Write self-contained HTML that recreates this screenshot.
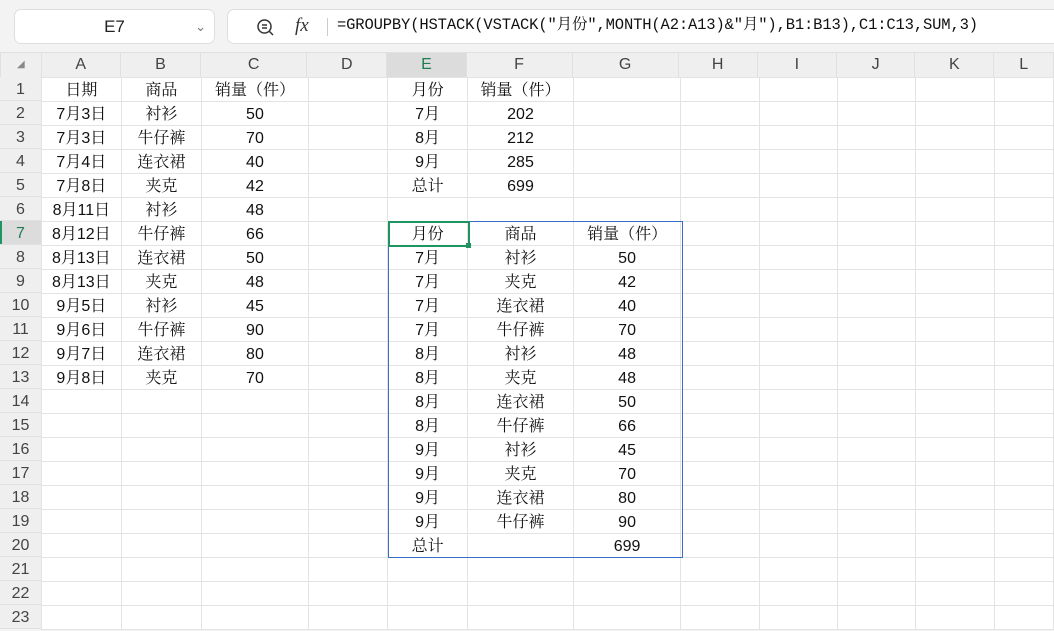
<!DOCTYPE html>
<html><head><meta charset="utf-8"><style>
*{margin:0;padding:0;box-sizing:border-box}
body{width:1054px;height:627px;overflow:hidden;background:#f3f3f3;font-family:"Liberation Sans","Noto Serif CJK SC",serif;position:relative}
.box{position:absolute;background:#fff;border:1px solid #dedede;border-radius:7px}
#name{left:14px;top:9px;width:201px;height:35px;font:17px "Liberation Sans",sans-serif;color:#222;text-align:center;line-height:33px}
#fx{left:227px;top:9px;width:840px;height:35px}
#formula{position:absolute;left:337px;top:9px;line-height:33px;font-size:15.5px;color:#111;font-family:"Liberation Mono","Noto Serif CJK SC",monospace;white-space:nowrap;letter-spacing:-0.15px}
table{position:absolute;border-collapse:collapse;table-layout:fixed}
td{border:1px solid #e3e3e3;height:24px;text-align:center;font-size:16px;color:#111;padding:0;line-height:21px;vertical-align:bottom;white-space:nowrap;overflow:hidden}
#hdr td{background:#efefef;font:16px "Liberation Sans",sans-serif;color:#444;height:25px;border-color:#e0e0e0;padding:0;vertical-align:middle;line-height:22px}
#grid{left:41px;top:77px;background:#fff}
#rows{position:absolute;left:0;top:77px;width:42px;background:#efefef}
#rows div{height:24px;border-bottom:1px solid #e0e0e0;font:16px "Liberation Sans",sans-serif;color:#444;text-align:center;line-height:26px;border-right:1px solid #e0e0e0}
</style></head><body>
<div class="box" id="name">E7<span style="position:absolute;right:8px;top:0;color:#777;font-size:13px">&#8964;</span></div>
<div class="box" id="fx">
<svg style="position:absolute;left:27px;top:7px" width="22" height="22" viewBox="0 0 22 22"><circle cx="9.5" cy="9.5" r="6.5" fill="none" stroke="#333" stroke-width="1.5"/><path d="M14.5 14.5L18 18M7 8h5M7 11h5" stroke="#333" stroke-width="1.5"/></svg>
<span style="position:absolute;left:67px;top:5px;font:italic 19px 'Liberation Serif',serif;color:#333">fx</span>
<div style="position:absolute;left:99px;top:8px;width:1px;height:18px;background:#ccc"></div>
</div>
<div id="formula">=GROUPBY(HSTACK(VSTACK("月份",MONTH(A2:A13)&amp;"月"),B1:B13),C1:C13,SUM,3)</div>
<table id="hdr" style="left:0;top:52px">
<colgroup><col style="width:41px"><col style="width:80px"><col style="width:81px"><col style="width:107px"><col style="width:81px"><col style="width:80px"><col style="width:107px"><col style="width:107px"><col style="width:80px"><col style="width:80px"><col style="width:79px"><col style="width:80px"><col style="width:60px"></colgroup>
<tr><td style="color:#888;font-size:10px">&#9698;</td><td>A</td><td>B</td><td>C</td><td>D</td><td style="background:#dcdcdc;color:#1e7d52;border-bottom:2px solid #1e9461">E</td><td>F</td><td>G</td><td>H</td><td>I</td><td>J</td><td>K</td><td>L</td></tr></table>
<div id="rows">
<div>1</div><div>2</div><div>3</div><div>4</div><div>5</div><div>6</div><div style="background:#dcdcdc;color:#1e7d52;box-shadow:inset 2px 0 #1e9461">7</div><div>8</div><div>9</div><div>10</div><div>11</div><div>12</div><div>13</div><div>14</div><div>15</div><div>16</div><div>17</div><div>18</div><div>19</div><div>20</div><div>21</div><div>22</div><div>23</div></div>
<table id="grid">
<colgroup><col style="width:80px"><col style="width:81px"><col style="width:107px"><col style="width:81px"><col style="width:80px"><col style="width:107px"><col style="width:107px"><col style="width:80px"><col style="width:80px"><col style="width:79px"><col style="width:80px"><col style="width:60px"></colgroup>
<tr><td>日期</td><td>商品</td><td>销量（件）</td><td></td><td>月份</td><td>销量（件）</td><td></td><td></td><td></td><td></td><td></td><td></td></tr>
<tr><td>7月3日</td><td>衬衫</td><td>50</td><td></td><td>7月</td><td>202</td><td></td><td></td><td></td><td></td><td></td><td></td></tr>
<tr><td>7月3日</td><td>牛仔裤</td><td>70</td><td></td><td>8月</td><td>212</td><td></td><td></td><td></td><td></td><td></td><td></td></tr>
<tr><td>7月4日</td><td>连衣裙</td><td>40</td><td></td><td>9月</td><td>285</td><td></td><td></td><td></td><td></td><td></td><td></td></tr>
<tr><td>7月8日</td><td>夹克</td><td>42</td><td></td><td>总计</td><td>699</td><td></td><td></td><td></td><td></td><td></td><td></td></tr>
<tr><td>8月11日</td><td>衬衫</td><td>48</td><td></td><td></td><td></td><td></td><td></td><td></td><td></td><td></td><td></td></tr>
<tr><td>8月12日</td><td>牛仔裤</td><td>66</td><td></td><td>月份</td><td>商品</td><td>销量（件）</td><td></td><td></td><td></td><td></td><td></td></tr>
<tr><td>8月13日</td><td>连衣裙</td><td>50</td><td></td><td>7月</td><td>衬衫</td><td>50</td><td></td><td></td><td></td><td></td><td></td></tr>
<tr><td>8月13日</td><td>夹克</td><td>48</td><td></td><td>7月</td><td>夹克</td><td>42</td><td></td><td></td><td></td><td></td><td></td></tr>
<tr><td>9月5日</td><td>衬衫</td><td>45</td><td></td><td>7月</td><td>连衣裙</td><td>40</td><td></td><td></td><td></td><td></td><td></td></tr>
<tr><td>9月6日</td><td>牛仔裤</td><td>90</td><td></td><td>7月</td><td>牛仔裤</td><td>70</td><td></td><td></td><td></td><td></td><td></td></tr>
<tr><td>9月7日</td><td>连衣裙</td><td>80</td><td></td><td>8月</td><td>衬衫</td><td>48</td><td></td><td></td><td></td><td></td><td></td></tr>
<tr><td>9月8日</td><td>夹克</td><td>70</td><td></td><td>8月</td><td>夹克</td><td>48</td><td></td><td></td><td></td><td></td><td></td></tr>
<tr><td></td><td></td><td></td><td></td><td>8月</td><td>连衣裙</td><td>50</td><td></td><td></td><td></td><td></td><td></td></tr>
<tr><td></td><td></td><td></td><td></td><td>8月</td><td>牛仔裤</td><td>66</td><td></td><td></td><td></td><td></td><td></td></tr>
<tr><td></td><td></td><td></td><td></td><td>9月</td><td>衬衫</td><td>45</td><td></td><td></td><td></td><td></td><td></td></tr>
<tr><td></td><td></td><td></td><td></td><td>9月</td><td>夹克</td><td>70</td><td></td><td></td><td></td><td></td><td></td></tr>
<tr><td></td><td></td><td></td><td></td><td>9月</td><td>连衣裙</td><td>80</td><td></td><td></td><td></td><td></td><td></td></tr>
<tr><td></td><td></td><td></td><td></td><td>9月</td><td>牛仔裤</td><td>90</td><td></td><td></td><td></td><td></td><td></td></tr>
<tr><td></td><td></td><td></td><td></td><td>总计</td><td></td><td>699</td><td></td><td></td><td></td><td></td><td></td></tr>
<tr><td></td><td></td><td></td><td></td><td></td><td></td><td></td><td></td><td></td><td></td><td></td><td></td></tr>
<tr><td></td><td></td><td></td><td></td><td></td><td></td><td></td><td></td><td></td><td></td><td></td><td></td></tr>
<tr><td></td><td></td><td></td><td></td><td></td><td></td><td></td><td></td><td></td><td></td><td></td><td></td></tr>
</table>
<div style="position:absolute;left:388px;top:221px;width:295px;height:337px;border:1px solid #3a6cc9"></div>
<div style="position:absolute;left:388px;top:221px;width:82px;height:26px;border:2px solid #1e9461"></div>
<div style="position:absolute;left:466px;top:243px;width:5px;height:5px;background:#1e9461"></div>
</body></html>
